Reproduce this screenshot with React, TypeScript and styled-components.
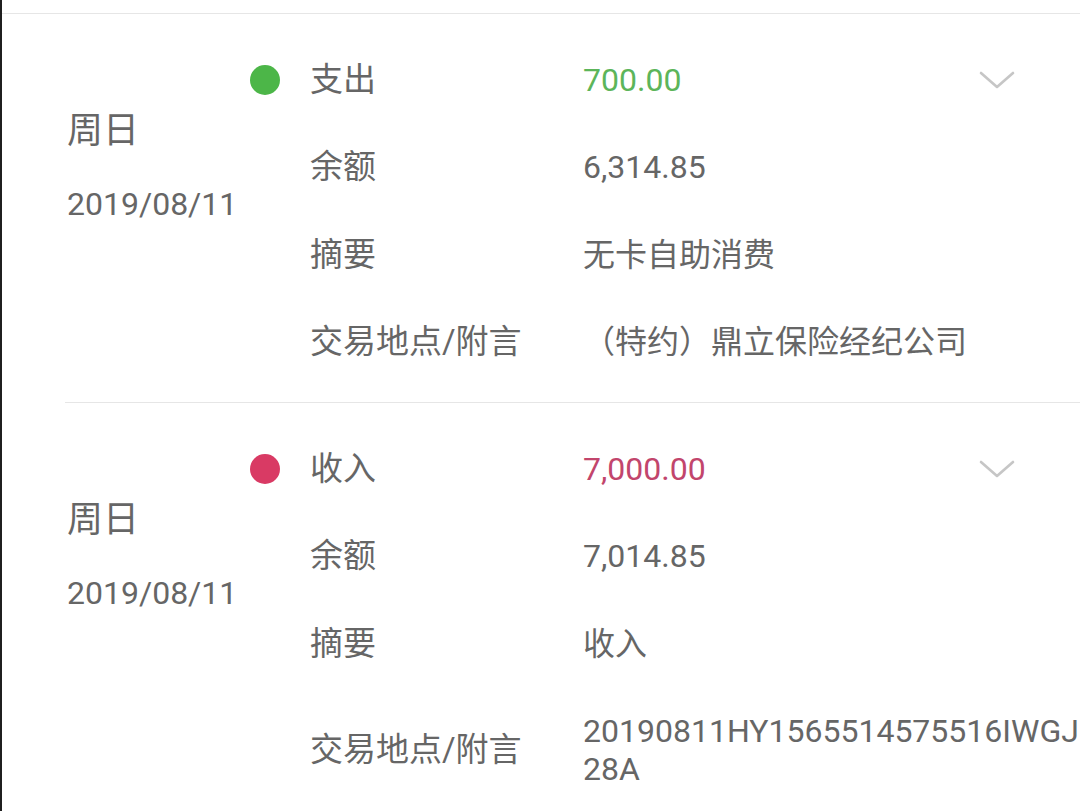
import React from "react";
import styled, { createGlobalStyle } from "styled-components";

const GlobalStyle = createGlobalStyle`
  html, body {
    margin: 0;
    padding: 0;
    background: #ffffff;
    overflow: hidden;
  }
  body {
    font-family: Roboto, "Noto Sans CJK SC", sans-serif;
    color: #666666;
  }
`;

const Page = styled.div`
  width: 1080px;
  height: 811px;
  box-sizing: border-box;
  border-left: 2px solid #1f1f1f;
  overflow: hidden;
`;

const TopBar = styled.div`
  height: 13px;
  border-bottom: 1px solid #e6e6e6;
`;

const Record = styled.div`
  display: flex;
  margin-left: 63px;
  padding: 22px 0 16px;
  border-bottom: 1px solid #e6e6e6;
`;

const DateCol = styled.div`
  width: 183px;
  padding: 73px 0 0 2px;
  flex-shrink: 0;
`;

const Weekday = styled.div`
  font-size: 36px;
  line-height: 44px;
  margin-bottom: 32px;
`;

const DateText = styled.div`
  font-size: 32px;
  line-height: 38px;
`;

const Details = styled.div`
  flex: 1;
  display: flex;
  flex-direction: column;
`;

const Row = styled.div`
  display: grid;
  grid-template-columns: 60px 273px 1fr;
  align-items: center;
  padding: 24.75px 0;
`;

const Dot = styled.span<{ $color: string }>`
  width: 30px;
  height: 30px;
  border-radius: 50%;
  background: ${(p) => p.$color};
`;

const Label = styled.div`
  grid-column: 2;
  font-size: 33px;
  line-height: 38px;
  white-space: nowrap;
`;

const Value = styled.div<{ $color?: string }>`
  font-size: 32px;
  line-height: 38px;
  color: ${(p) => p.$color || "#666666"};
  word-break: break-all;
  overflow-wrap: anywhere;
`;

const AmountCell = styled.div`
  display: flex;
  align-items: center;
  justify-content: space-between;
  padding-right: 65px;
`;

const Chevron = () => (
  <svg width="36" height="18" viewBox="0 0 36 18">
    <path
      d="M2 2 L18 16 L34 2"
      fill="none"
      stroke="#c6c6c6"
      strokeWidth="2.6"
      strokeLinecap="round"
      strokeLinejoin="round"
    />
  </svg>
);

type Item = {
  weekday: string;
  date: string;
  type: string;
  dotColor: string;
  amount: string;
  amountColor: string;
  balance: string;
  summary: string;
  place: string;
};

const items: Item[] = [
  {
    weekday: "周日",
    date: "2019/08/11",
    type: "支出",
    dotColor: "#4cb648",
    amount: "700.00",
    amountColor: "#5cb55a",
    balance: "6,314.85",
    summary: "无卡自助消费",
    place: "（特约）鼎立保险经纪公司",
  },
  {
    weekday: "周日",
    date: "2019/08/11",
    type: "收入",
    dotColor: "#d93a64",
    amount: "7,000.00",
    amountColor: "#c2456c",
    balance: "7,014.85",
    summary: "收入",
    place: "20190811HY1565514575516IWGJ28A",
  },
];

const RecordItem = ({ item }: { item: Item }) => (
  <Record>
    <DateCol>
      <Weekday>{item.weekday}</Weekday>
      <DateText>{item.date}</DateText>
    </DateCol>
    <Details>
      <Row>
        <Dot $color={item.dotColor} />
        <Label>{item.type}</Label>
        <AmountCell>
          <Value $color={item.amountColor}>{item.amount}</Value>
          <Chevron />
        </AmountCell>
      </Row>
      <Row>
        <Label>余额</Label>
        <Value>{item.balance}</Value>
      </Row>
      <Row>
        <Label>摘要</Label>
        <Value>{item.summary}</Value>
      </Row>
      <Row>
        <Label>交易地点/附言</Label>
        <Value>{item.place}</Value>
      </Row>
    </Details>
  </Record>
);

export default function App() {
  return (
    <>
      <GlobalStyle />
      <Page>
        <TopBar />
        {items.map((item, i) => (
          <RecordItem key={i} item={item} />
        ))}
      </Page>
    </>
  );
}
